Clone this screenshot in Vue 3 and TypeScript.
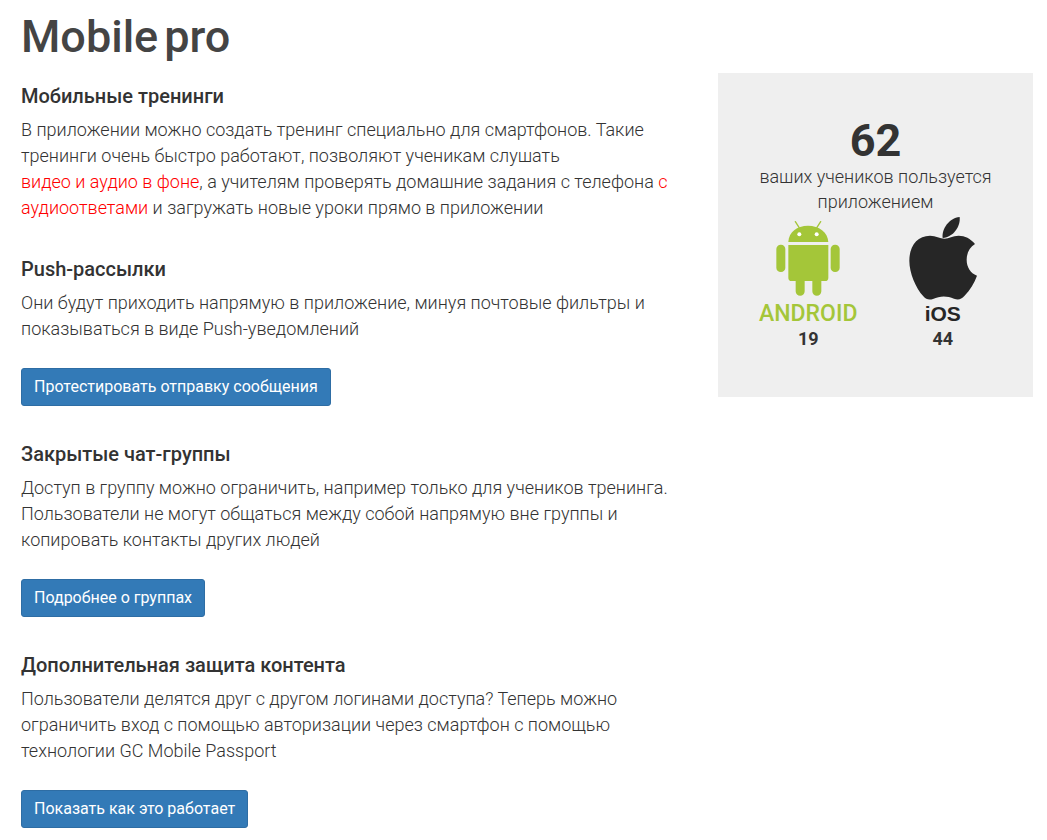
<script setup lang="ts">
interface TextPart {
  text: string
  accent?: boolean
}

interface Feature {
  title: string
  parts: TextPart[]
  action?: string
}

const features: Feature[] = [
  {
    title: 'Мобильные тренинги',
    parts: [
      { text: 'В приложении можно создать тренинг специально для смартфонов. Такие тренинги очень быстро работают, позволяют ученикам слушать ' },
      { text: 'видео\u00a0и\u00a0аудио\u00a0в\u00a0фоне', accent: true },
      { text: ', а учителям проверять домашние задания с телефона ' },
      { text: 'с аудиоответами', accent: true },
      { text: ' и загружать новые уроки прямо в приложении' },
    ],
  },
  {
    title: 'Push-рассылки',
    parts: [{ text: 'Они будут приходить напрямую в приложение, минуя почтовые фильтры и показываться в виде Push-уведомлений' }],
    action: 'Протестировать отправку сообщения',
  },
  {
    title: 'Закрытые чат-группы',
    parts: [{ text: 'Доступ в группу можно ограничить, например только для учеников тренинга. Пользователи не могут общаться между собой напрямую вне группы и копировать контакты других людей' }],
    action: 'Подробнее о группах',
  },
  {
    title: 'Дополнительная защита контента',
    parts: [{ text: 'Пользователи делятся друг с другом логинами доступа? Теперь можно ограничить вход с помощью авторизации через смартфон с помощью технологии GC Mobile Passport' }],
    action: 'Показать как это работает',
  },
]

const stats = { total: 62, android: 19, ios: 44 }
</script>

<template>
  <main class="page">
    <h1 class="title"><span>Mobile</span> <span>pro</span></h1>
    <div class="columns">
      <div class="features">
        <section v-for="feature in features" :key="feature.title" class="feature">
          <h2 class="heading">{{ feature.title }}</h2>
          <p class="text"><template v-for="(part, i) in feature.parts" :key="i"><span v-if="part.accent" class="accent">{{ part.text }}</span><template v-else>{{ part.text }}</template></template></p>
          <button v-if="feature.action" type="button" class="button">{{ feature.action }}</button>
        </section>
      </div>

      <aside class="panel">
        <div class="total">{{ stats.total }}</div>
        <p class="caption">ваших учеников пользуется приложением</p>
        <div class="platforms">
          <div class="platform">
            <svg class="logo" width="66" height="84" viewBox="-3 0 198 252" fill="#a4c639" aria-hidden="true">
              <path d="M58 14 71 34M134 14 121 34" stroke="#a4c639" stroke-width="4" stroke-linecap="round" />
              <path d="M37 75C38 45 63 26 96 26s59 19 61 49z" />
              <circle cx="70" cy="52" r="6" fill="#fff" />
              <circle cx="122" cy="52" r="6" fill="#fff" />
              <path d="M37 84h120v98q0 10-10 10h-11v31a13 13 0 0 1-27 0v-31H86v31a13 13 0 0 1-27 0v-31H47q-10 0-10-10z" />
              <rect x="1" y="83" width="27" height="82" rx="13" />
              <rect x="164" y="83" width="27" height="82" rx="13" />
            </svg>
            <span class="name android">ANDROID</span>
            <span class="count">{{ stats.android }}</span>
          </div>
          <div class="platform">
            <svg class="logo" width="70" height="86" viewBox="0 0 210 258" fill="#262626" aria-hidden="true">
              <path d="M155 6c3 28-18 60-51 63-4-26 19-60 51-63z" />
              <path d="M201 87c-14-17-30-25-49-25-18 0-29 9-42 9-15 0-26-9-44-9C28 62 4 93 4 137c0 37 19 81 42 107 8 9 17 12 29 8 21-10 42-10 63-1 13 5 22 2 31-8 17-18 30-38 38-61-20-8-31-26-31-48 0-20 9-37 25-47z" />
            </svg>
            <span class="name ios">iOS</span>
            <span class="count">{{ stats.ios }}</span>
          </div>
        </div>
      </aside>
    </div>
  </main>
</template>

<style>
body {
  margin: 0;
  background: #fff;
}
</style>

<style scoped>
.page {
  padding: 12px 14px 12px 21px;
  font-family: Roboto, "Noto Sans", sans-serif;
  font-size: 18px;
  font-weight: 300;
  line-height: 26px;
  color: #333;
}

.title {
  display: flex;
  gap: 6px;
  margin: 0 0 11px;
  font-size: 45px;
  font-weight: 500;
  line-height: 50px;
  color: #444;
}

.columns {
  display: grid;
  grid-template-columns: minmax(0, 1fr) 315px;
  gap: 30px;
  align-items: start;
}

.features {
  display: flex;
  flex-direction: column;
  gap: 38px;
  padding-top: 13px;
}

.heading {
  margin: 0 0 11px;
  font-size: 20px;
  font-weight: 500;
  line-height: 20px;
}

.text {
  margin: 0;
}

.accent {
  color: #f00;
}

.button {
  display: block;
  height: 38px;
  margin-top: 26px;
  padding: 0 12px;
  border: 1px solid #2e6da4;
  border-radius: 3px;
  background: #337ab7;
  color: #fff;
  font: 400 16px/24px Roboto, "Noto Sans", sans-serif;
  cursor: pointer;
}

.panel {
  box-sizing: border-box;
  padding: 45px 23px 46px;
  background: #efefef;
  text-align: center;
}

.total {
  font-size: 45px;
  font-weight: 700;
  line-height: 46px;
}

.caption {
  margin: 0 0 1px;
  line-height: 25px;
}

.platforms {
  display: grid;
  grid-template-columns: 1fr 1fr;
}

.platform {
  display: flex;
  flex-direction: column;
  align-items: center;
  justify-content: flex-end;
}

.logo {
  display: block;
}

.name {
  font-size: 21px;
  line-height: 26px;
}

.android {
  font-size: 23px;
  font-weight: 500;
  color: #a4c639;
}

.ios {
  font-family: "Liberation Sans", Arial, sans-serif;
  font-weight: 700;
  color: #262626;
}

.count {
  font-weight: 700;
  line-height: 24px;
}
</style>
